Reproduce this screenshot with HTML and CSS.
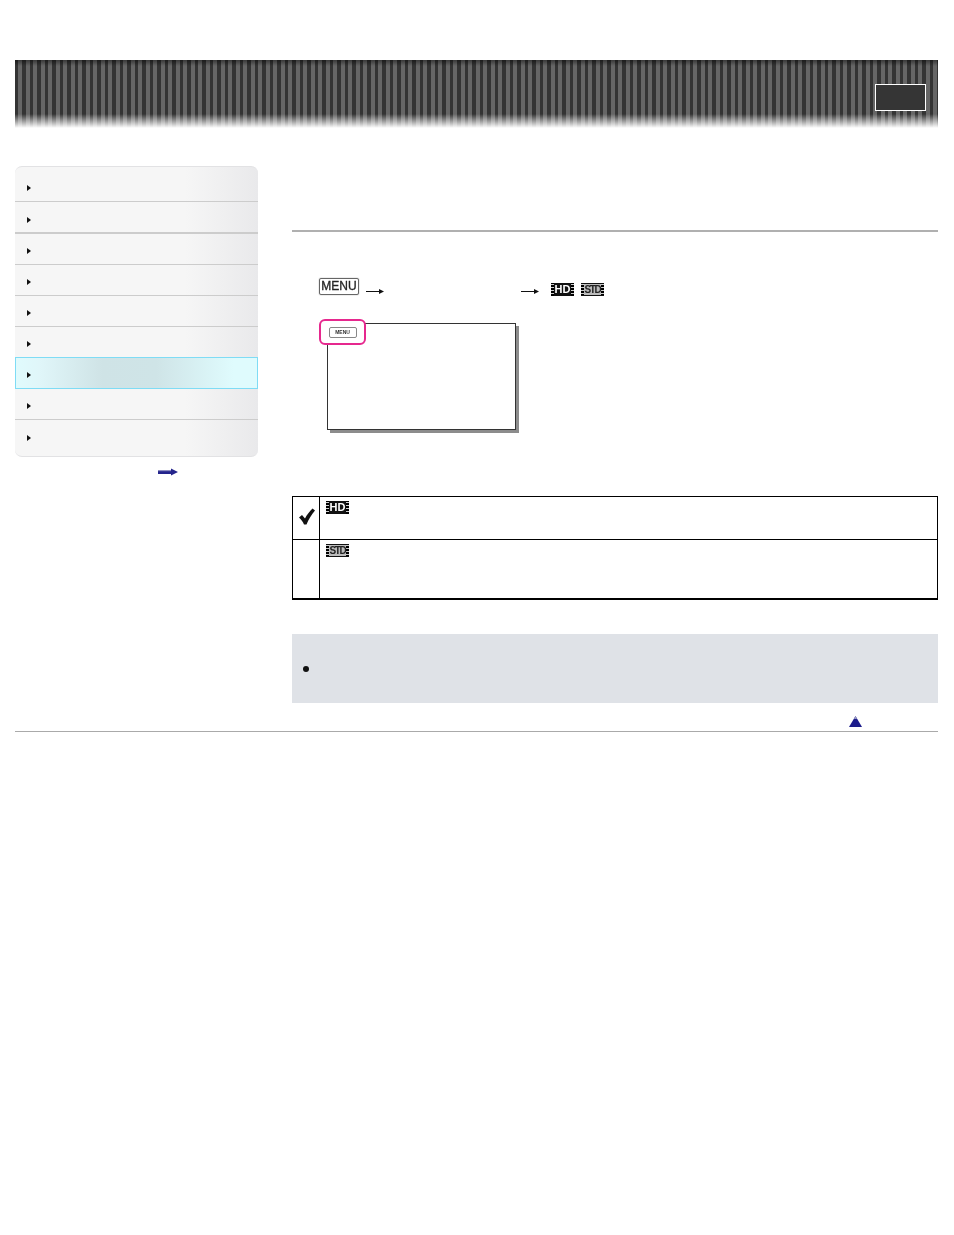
FILE: index.html
```html
<!DOCTYPE html>
<html lang="en">
<head>
  <meta charset="UTF-8" />
  <title>Help Guide</title>
  <link rel="stylesheet" href="styles.css">
</head>
<body>

<header class="banner">
  <div class="search-box"></div>
</header>

<div class="page">
  <!-- Side menu -->
  <div class="side">
    <ul class="nav">
      <li><i class="tri"></i></li>
      <li class="thick"><i class="tri"></i></li>
      <li><i class="tri"></i></li>
      <li><i class="tri"></i></li>
      <li><i class="tri"></i></li>
      <li class="before-active"><i class="tri"></i></li>
      <li class="active"><i class="tri"></i></li>
      <li><i class="tri"></i></li>
      <li class="last"><i class="tri"></i></li>
    </ul>
    <div class="more">
      <svg width="21" height="8" viewBox="0 0 21 8"><path d="M0 2h13V0.500l7 3.500-7 3.500V6H0z" fill="#24248c"/><path d="M0 2h13v1.200H0z" fill="#8c8cc0"/></svg>
    </div>
  </div>

  <!-- Main content -->
  <div class="main">
    <div class="title-rule"></div>

    <div class="steps">
      <span class="menu-key">MENU</span>
      <svg class="step-arrow first" width="18" height="7" viewBox="0 0 18 7"><path d="M0 3.500h14" stroke="#111" stroke-width="1"/><path d="M13 1l5 2.500-5 2.500z" fill="#111"/></svg>
      <svg class="step-arrow second" width="18" height="7" viewBox="0 0 18 7"><path d="M0 3.500h14" stroke="#111" stroke-width="1"/><path d="M13 1l5 2.500-5 2.500z" fill="#111"/></svg>
      <span class="film hd big">HD</span>
      <span class="film std big">STD</span>
    </div>

    <div class="screen">
      <div class="screen-key"><span>MENU</span></div>
    </div>

    <table class="options">
      <tr class="row-hd">
        <td class="check">
          <svg width="16" height="17" viewBox="0 0 16 17"><path d="M0 9.500l3-2.500 3 3.500C8 6.500 11 3 13.500 0.500L16 2.500C12.500 6.500 9.500 11.500 7.500 16.500H5C4 13.500 2 11.500 0 9.500z" fill="#111"/></svg>
        </td>
        <td><span class="film hd">HD</span></td>
      </tr>
      <tr class="row-std">
        <td class="check"></td>
        <td><span class="film std">STD</span></td>
      </tr>
    </table>

    <div class="note"><i class="dot"></i></div>

    <div class="to-top">
      <svg width="13" height="11" viewBox="0 0 13 11"><path d="M6.500 0L13 11H0z" fill="#1c1c8c"/><path d="M6.500 0L8 3H5z" fill="#9a9ac4"/></svg>
    </div>
  </div>
</div>

<div class="foot-rule"></div>

</body>
</html>
```

FILE: styles.css
```css
body {
  margin: 0;
  padding: 60px 16px 0 15px;
  background: #fff;
  font-family: "Liberation Sans", Arial, sans-serif;
  color: #000;
}
.banner {
  height: 68px;
  position: relative;
  background:
    linear-gradient(to bottom, rgba(0,0,0,0.45) 0, rgba(0,0,0,0) 6px, rgba(0,0,0,0) 54px, rgba(255,255,255,0.5) 61px, rgba(255,255,255,1) 68px),
    repeating-linear-gradient(to right, #343434 0, #343434 3.500px, #666 3.500px, #666 7.500px);
}
.search-box {
  position: absolute;
  top: 24px;
  right: 12px;
  width: 49px;
  height: 25px;
  background: #353535;
  border: 1px solid #fff;
}
.page {
  display: flex;
  gap: 34px;
  margin-top: 38px;
}
.side {
  width: 243px;
  flex-shrink: 0;
}
.nav {
  list-style: none;
  margin: 0;
  padding: 0;
  border: 1px solid #e2e2e4;
  border-width: 1px 0;
  border-radius: 7px;
  overflow: hidden;
  background: linear-gradient(to right, #f6f6f6 0, #f6f6f6 70%, #e9e9eb 100%);
}
.nav li {
  border-bottom: 1px solid #ccc;
  display: flex;
  align-items: center;
  padding: 3px 0 0 12px;
  height: 27px;
}
.nav li:first-child {
  height: 35px;
  padding-top: 0;
  align-items: flex-end;
  box-sizing: border-box;
}
.nav li:first-child .tri {
  margin-bottom: 10px;
}
.nav li.thick {
  border-bottom-width: 2px;
  padding-top: 5px;
  height: 25px;
}
.nav li.before-active {
  border-bottom-color: #7fdcf5;
}
.nav li.active {
  border-bottom: 1px solid #7fdcf5;
  box-shadow: inset 1px 0 0 #7fdcf5, inset -1px 0 0 #7fdcf5;
  background: linear-gradient(to right, #e0fbfd 0, #e0f6f9 10%, #cfe3e6 36%, #cfe4e7 58%, #dffbfd 90%);
}
.nav li.last {
  height: 36px;
  border-bottom: 0;
  padding: 0 0 1px 12px;
  box-sizing: border-box;
}
.tri {
  width: 0;
  height: 0;
  border-left: 4px solid #111;
  border-top: 3.500px solid transparent;
  border-bottom: 3.500px solid transparent;
}
.more {
  display: flex;
  justify-content: center;
  padding: 11px 0 0 64px;
}
.main {
  flex: 1;
  min-width: 0;
  padding-top: 64px;
}
.title-rule {
  height: 2px;
  background: #b0b0b0;
}
.steps {
  position: relative;
  height: 20px;
  margin: 46px 0 0 27px;
  display: flex;
  align-items: flex-start;
}
.menu-key {
  width: 38px;
  height: 15px;
  border: 1px solid #666;
  box-shadow: 0 0 1px #555;
  border-radius: 2px;
  font-size: 12px;
  line-height: 15px;
  text-align: center;
  color: #222;
  -webkit-text-stroke: 0.300px #222;
  filter: blur(0.3px);
}
.step-arrow {
  position: absolute;
  top: 10px;
}
.step-arrow.first { left: 47px; }
.step-arrow.second { left: 202px; }
.film {
  display: inline-block;
  width: 23px;
  height: 13px;
  padding: 0 3px;
  line-height: 13px;
  font-size: 11px;
  font-weight: bold;
  text-align: center;
  box-sizing: border-box;
  overflow: hidden;
  color: #fff;
  background-color: #111;
  background-image:
    repeating-linear-gradient(to bottom, #000 0, #000 1.500px, #ccc 1.500px, #ccc 2.500px, #000 2.500px, #000 3px),
    repeating-linear-gradient(to bottom, #000 0, #000 1.500px, #ccc 1.500px, #ccc 2.500px, #000 2.500px, #000 3px);
  background-size: 3px 100%;
  background-position: left top, right top;
  background-repeat: no-repeat;
  filter: blur(0.3px);
}
.film.std {
  font-size: 10px;
  font-weight: bold;
  letter-spacing: -1.400px;
  color: #222;
  background-color: #bbb;
  box-shadow: inset 0 1px 0 #111, inset 0 -1px 0 #111;
}
.film.big {
  margin-top: 5px;
}
.film.hd.big { margin-left: 192px; }
.film.std.big { margin-left: 7px; }
.screen {
  position: relative;
  width: 187px;
  height: 105px;
  margin: 25px 0 0 35px;
  border: 1px solid #333;
  box-shadow: 3px 3px 0 #8c8c8c;
  background: #fff;
}
.screen-key {
  position: absolute;
  top: -5px;
  left: -9px;
  width: 43px;
  height: 22px;
  border: 2px solid #e6288e;
  border-radius: 6px;
  background: #fff;
  display: flex;
  align-items: center;
  justify-content: center;
}
.screen-key span {
  width: 26px;
  height: 9px;
  border: 1px solid #888;
  border-radius: 2px;
  font-size: 5px;
  line-height: 9px;
  font-weight: bold;
  text-align: center;
  color: #333;
  filter: blur(0.3px);
}
.options {
  width: 100%;
  margin-top: 66px;
  border-collapse: collapse;
  border: 1px solid #000;
  border-bottom-width: 2px;
}
.options td {
  border: 1px solid #000;
  padding: 4px 6px;
  vertical-align: top;
}
.row-hd td { height: 34px; }
.row-std td { height: 50px; }
.options .film { display: block; }
.options td.check {
  width: 16px;
  vertical-align: middle;
  padding: 0 4px 0 6px;
}
.check svg { display: block; margin-bottom: 4px; }
.note {
  height: 69px;
  margin-top: 34px;
  background: #dfe2e7;
  display: flex;
  align-items: center;
  padding-left: 11px;
}
.dot {
  width: 6px;
  height: 6px;
  border-radius: 50%;
  background: #111;
}
.to-top {
  display: flex;
  justify-content: flex-end;
  padding: 13px 76px 0 0;
}
.to-top svg { display: block; }
.foot-rule {
  height: 1px;
  margin-top: 4px;
  background: #aaa;
}
```
